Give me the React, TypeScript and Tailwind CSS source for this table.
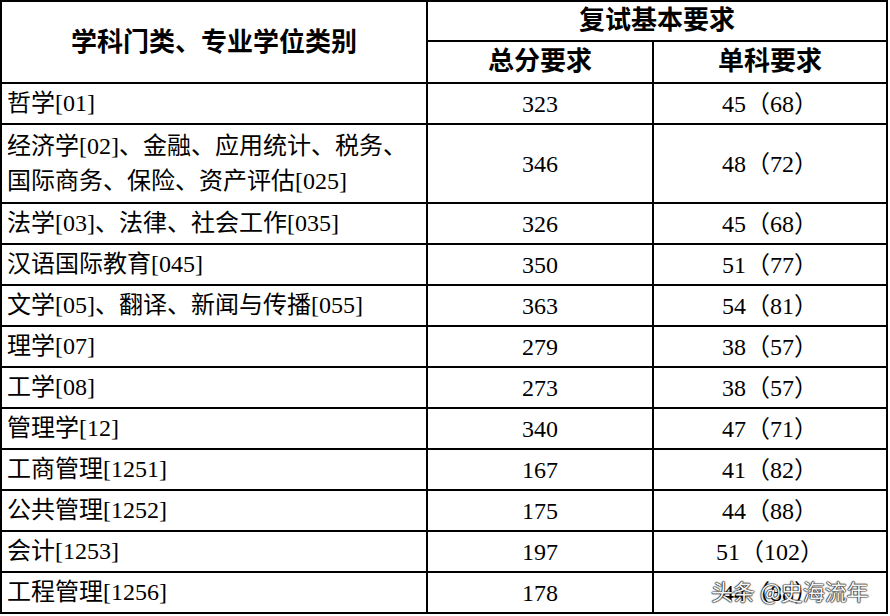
const rows: { name: string[]; total: string; single: string }[] = [
  { name: ["哲学[01]"], total: "323", single: "45（68）" },
  {
    name: ["经济学[02]、金融、应用统计、税务、", "国际商务、保险、资产评估[025]"],
    total: "346",
    single: "48（72）",
  },
  { name: ["法学[03]、法律、社会工作[035]"], total: "326", single: "45（68）" },
  { name: ["汉语国际教育[045]"], total: "350", single: "51（77）" },
  { name: ["文学[05]、翻译、新闻与传播[055]"], total: "363", single: "54（81）" },
  { name: ["理学[07]"], total: "279", single: "38（57）" },
  { name: ["工学[08]"], total: "273", single: "38（57）" },
  { name: ["管理学[12]"], total: "340", single: "47（71）" },
  { name: ["工商管理[1251]"], total: "167", single: "41（82）" },
  { name: ["公共管理[1252]"], total: "175", single: "44（88）" },
  { name: ["会计[1253]"], total: "197", single: "51（102）" },
  { name: ["工程管理[1256]"], total: "178", single: "44（88）" },
];

const font = "font-['Liberation_Serif','Noto_Sans_CJK_SC',serif]";

export default function App() {
  return (
    <div className={`relative w-[890px] h-[616px] bg-white text-black ${font}`}>
      <table className="border-separate border-spacing-0 w-[888px] table-fixed">
        <colgroup>
          <col className="w-[428px]" />
          <col className="w-[226px]" />
          <col className="w-[234px]" />
        </colgroup>
        <thead>
          <tr className="h-[42px]">
            <th
              rowSpan={2}
              className="border-2 border-black text-[26px] font-bold p-0 text-center align-middle"
            >
              学科门类、专业学位类别
            </th>
            <th
              colSpan={2}
              className="border-t-2 border-r-2 border-b-2 border-black text-[26px] font-bold p-0 leading-[38px] text-center"
            >
              复试基本要求
            </th>
          </tr>
          <tr className="h-[42px]">
            <th className="border-r-2 border-b-2 border-black text-[26px] font-bold p-0 leading-[40px] text-center">
              总分要求
            </th>
            <th className="border-r-2 border-b-2 border-black text-[26px] font-bold p-0 leading-[40px] text-center">
              单科要求
            </th>
          </tr>
        </thead>
        <tbody className="text-[24px]">
          {rows.map((r) => (
            <tr key={r.total + r.name[0]} className={r.name.length > 1 ? "h-[79px]" : "h-[41px]"}>
              <td className="border-l-2 border-r-2 border-b-2 border-black pl-[5px] py-0 leading-[35px] whitespace-nowrap align-middle">
                {r.name.map((n) => (
                  <div key={n}>{n}</div>
                ))}
              </td>
              <td className="border-r-2 border-b-2 border-black p-0 text-center align-middle">
                {r.total}
              </td>
              <td className="border-r-2 border-b-2 border-black p-0 text-center align-middle">
                {r.single}
              </td>
            </tr>
          ))}
        </tbody>
      </table>
      {/* watermark over the last row */}
      <div className="absolute left-[711px] top-[577px] text-[22px] leading-[26px] text-[#f4f4f4] font-['Noto_Sans_CJK_SC',sans-serif] [text-shadow:0_0_1px_#111,0_0_1px_#111,0_0_1px_#111,0_0_2px_#333]">
        头条 @史海流年
      </div>
    </div>
  );
}
